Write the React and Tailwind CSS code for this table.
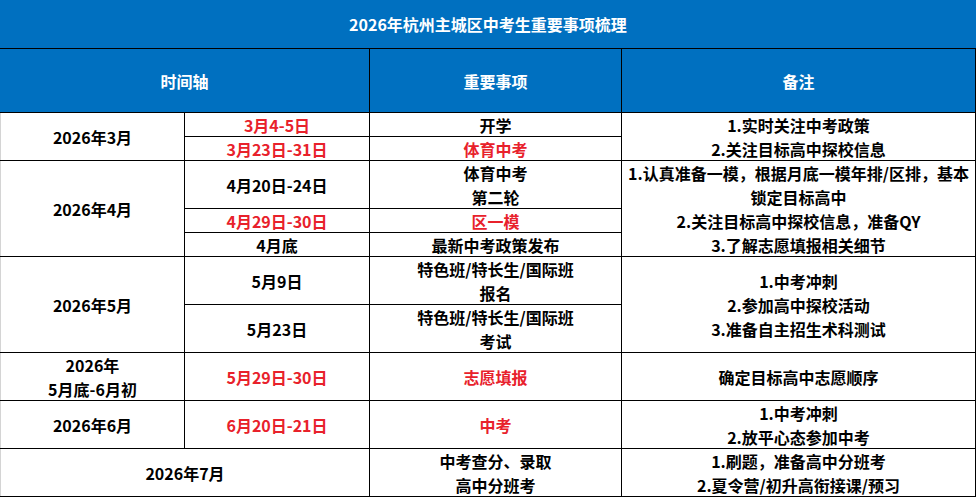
const font = { fontFamily: '"Noto Sans CJK SC", "Noto Sans", sans-serif' }

function Cell({ className = "", red, lines, left }) {
  return (
    <div
      className={`bg-white flex flex-col items-center justify-center text-center leading-[24px] ${
        red ? "text-[#e8212b]" : "text-black"
      } ${left ? "border-l border-[#d4d4d4]" : ""} ${className}`}
    >
      {lines.map((l, i) => (
        <span key={i} className="whitespace-nowrap">{l}</span>
      ))}
    </div>
  )
}

export default function App() {
  return (
    <div className="w-[976px] h-[499px] bg-white font-bold text-[16px]" style={font}>
      {/* Title */}
      <div className="h-[48px] bg-[#0070c0] text-white flex items-center justify-center">
        2026年杭州主城区中考生重要事项梳理
      </div>

      {/* Table */}
      <div className="grid grid-cols-[184px_184px_251px_353px] grid-rows-[63px_repeat(16,23px)] gap-px bg-black pt-px pr-px pb-px">
        <div className="col-start-1 col-span-2 row-start-1 bg-[#0070c0] text-white flex items-center justify-center">时间轴</div>
        <div className="col-start-3 row-start-1 bg-[#0070c0] text-white flex items-center justify-center">重要事项</div>
        <div className="col-start-4 row-start-1 bg-[#0070c0] text-white flex items-center justify-center">备注</div>

        {/* March */}
        <Cell left className="col-start-1 row-start-2 row-span-2" lines={["2026年3月"]} />
        <Cell red className="col-start-2 row-start-2" lines={["3月4-5日"]} />
        <Cell red className="col-start-2 row-start-3" lines={["3月23日-31日"]} />
        <Cell className="col-start-3 row-start-2" lines={["开学"]} />
        <Cell red className="col-start-3 row-start-3" lines={["体育中考"]} />
        <Cell className="col-start-4 row-start-2 row-span-2" lines={["1.实时关注中考政策", "2.关注目标高中探校信息"]} />

        {/* April */}
        <Cell left className="col-start-1 row-start-4 row-span-4" lines={["2026年4月"]} />
        <Cell className="col-start-2 row-start-4 row-span-2" lines={["4月20日-24日"]} />
        <Cell red className="col-start-2 row-start-6" lines={["4月29日-30日"]} />
        <Cell className="col-start-2 row-start-7" lines={["4月底"]} />
        <Cell className="col-start-3 row-start-4 row-span-2" lines={["体育中考", "第二轮"]} />
        <Cell red className="col-start-3 row-start-6" lines={["区一模"]} />
        <Cell className="col-start-3 row-start-7" lines={["最新中考政策发布"]} />
        <Cell
          className="col-start-4 row-start-4 row-span-4"
          lines={["1.认真准备一模，根据月底一模年排/区排，基本", "锁定目标高中", "2.关注目标高中探校信息，准备QY", "3.了解志愿填报相关细节"]}
        />

        {/* May */}
        <Cell left className="col-start-1 row-start-8 row-span-4" lines={["2026年5月"]} />
        <Cell className="col-start-2 row-start-8 row-span-2" lines={["5月9日"]} />
        <Cell className="col-start-2 row-start-10 row-span-2" lines={["5月23日"]} />
        <Cell className="col-start-3 row-start-8 row-span-2" lines={["特色班/特长生/国际班", "报名"]} />
        <Cell className="col-start-3 row-start-10 row-span-2" lines={["特色班/特长生/国际班", "考试"]} />
        <Cell className="col-start-4 row-start-8 row-span-4" lines={["1.中考冲刺", "2.参加高中探校活动", "3.准备自主招生术科测试"]} />

        {/* Late May */}
        <Cell left className="col-start-1 row-start-12 row-span-2" lines={["2026年", "5月底-6月初"]} />
        <Cell red className="col-start-2 row-start-12 row-span-2" lines={["5月29日-30日"]} />
        <Cell red className="col-start-3 row-start-12 row-span-2" lines={["志愿填报"]} />
        <Cell className="col-start-4 row-start-12 row-span-2" lines={["确定目标高中志愿顺序"]} />

        {/* June */}
        <Cell left className="col-start-1 row-start-14 row-span-2" lines={["2026年6月"]} />
        <Cell red className="col-start-2 row-start-14 row-span-2" lines={["6月20日-21日"]} />
        <Cell red className="col-start-3 row-start-14 row-span-2" lines={["中考"]} />
        <Cell className="col-start-4 row-start-14 row-span-2" lines={["1.中考冲刺", "2.放平心态参加中考"]} />

        {/* July */}
        <Cell left className="col-start-1 col-span-2 row-start-16 row-span-2" lines={["2026年7月"]} />
        <Cell className="col-start-3 row-start-16 row-span-2" lines={["中考查分、录取", "高中分班考"]} />
        <Cell className="col-start-4 row-start-16 row-span-2" lines={["1.刷题，准备高中分班考", "2.夏令营/初升高衔接课/预习"]} />
      </div>
    </div>
  )
}
